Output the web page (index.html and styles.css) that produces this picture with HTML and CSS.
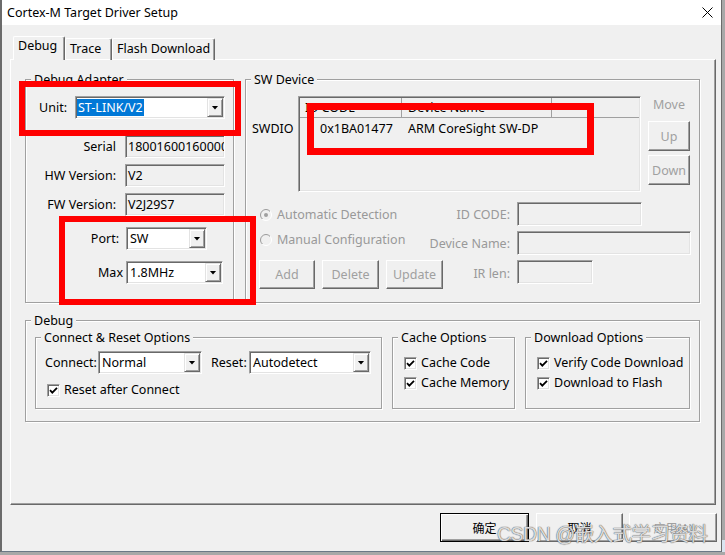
FILE: index.html
```html
<!DOCTYPE html>
<html lang="en">
<head>
    <meta charset="UTF-8">
    <meta name="viewport" content="width=device-width, initial-scale=1.0">
    <title>Cortex-M Target Driver Setup</title>
    <link rel="stylesheet" href="styles.css">
</head>
<body>
<div class="window">
    <div class="titlebar">
        <span class="title">Cortex-M Target Driver Setup</span>
        <svg class="close" width="11" height="11" viewBox="0 0 11 11"><path d="M0.5 0.5L10.5 10.5M10.5 0.5L0.5 10.5" stroke="#000" fill="none"/></svg>
    </div>

    <div class="tabs">
        <div class="tab tab-debug active">Debug</div>
        <div class="tab tab-trace">Trace</div>
        <div class="tab tab-flash">Flash Download</div>
    </div>

    <div class="panel">
        <div class="top-row">
            <!-- Debug Adapter -->
            <fieldset class="group adapter">
                <legend>Debug Adapter</legend>
                <div class="row row-unit">
                    <span class="lbl">Unit:</span>
                    <div class="combo"><span class="value"><span class="selected">ST-LINK/V2</span></span><span class="drop"></span></div>
                </div>
                <div class="row row-info">
                    <span class="lbl">Serial</span>
                    <div class="field">18001600160000325253535</div>
                </div>
                <div class="row row-info row-tight">
                    <span class="lbl">HW Version:</span>
                    <div class="field">V2</div>
                </div>
                <div class="row row-info row-tight">
                    <span class="lbl">FW Version:</span>
                    <div class="field">V2J29S7</div>
                </div>
                <div class="row row-port">
                    <span class="lbl">Port:</span>
                    <div class="combo"><span class="value">SW</span><span class="drop"></span></div>
                </div>
                <div class="row row-max">
                    <span class="lbl">Max</span>
                    <div class="combo"><span class="value">1.8MHz</span><span class="drop"></span></div>
                </div>
            </fieldset>

            <!-- SW Device -->
            <fieldset class="group device">
                <legend>SW Device</legend>
                <div class="device-top">
                    <span class="swdio">SWDIO</span>
                    <div class="list">
                        <div class="list-head">
                            <span class="col col-id">ID CODE</span>
                            <span class="col col-name">Device Name</span>
                            <span class="col col-rest"></span>
                        </div>
                        <div class="list-row">
                            <span class="cell-id">0x1BA01477</span>
                            <span class="cell-name">ARM CoreSight SW-DP</span>
                        </div>
                    </div>
                    <div class="move">
                        <div class="move-label">Move</div>
                        <button class="btn btn-up" disabled>Up</button>
                        <button class="btn btn-down" disabled>Down</button>
                    </div>
                </div>

                <div class="device-bottom">
                    <label class="radio r-auto">
                        <svg width="12" height="12" viewBox="0 0 12 12">
                            <defs><linearGradient id="rg1" x1="0" y1="0" x2="1" y2="1"><stop offset="0.5" stop-color="#9a9a9a"/><stop offset="0.5" stop-color="#fff"/></linearGradient></defs>
                            <circle cx="6" cy="6" r="5.5" fill="#f0f0f0" stroke="url(#rg1)"/>
                            <circle cx="6" cy="6" r="2" fill="#a0a0a0"/>
                        </svg>
                        Automatic Detection
                    </label>
                    <span class="dlbl">ID CODE:</span>
                    <div class="field f-id"></div>

                    <label class="radio r-manual">
                        <svg width="12" height="12" viewBox="0 0 12 12">
                            <defs><linearGradient id="rg2" x1="0" y1="0" x2="1" y2="1"><stop offset="0.5" stop-color="#9a9a9a"/><stop offset="0.5" stop-color="#fff"/></linearGradient></defs>
                            <circle cx="6" cy="6" r="5.5" fill="#f0f0f0" stroke="url(#rg2)"/>
                        </svg>
                        Manual Configuration
                    </label>
                    <span class="dlbl">Device Name:</span>
                    <div class="field f-name"></div>

                    <div class="edit-buttons">
                        <button class="btn b-add" disabled>Add</button>
                        <button class="btn b-delete" disabled>Delete</button>
                        <button class="btn b-update" disabled>Update</button>
                    </div>
                    <span class="dlbl d-ir">IR len:</span>
                    <div class="field f-ir"></div>
                </div>
            </fieldset>
        </div>

        <!-- Debug -->
        <fieldset class="group debug">
            <legend>Debug</legend>
            <div class="debug-row">
                <fieldset class="group connect">
                    <legend>Connect &amp; Reset Options</legend>
                    <div class="row connect-line">
                        <span class="l-connect">Connect:</span>
                        <div class="combo c-connect"><span class="value">Normal</span><span class="drop"></span></div>
                        <span class="l-reset">Reset:</span>
                        <div class="combo c-reset"><span class="value">Autodetect</span><span class="drop"></span></div>
                    </div>
                    <label class="check-line cl-reset">
                        <span class="check"><svg width="11" height="11" viewBox="0 0 11 11"><path d="M2 5.2L4.3 7.6L9 2.8" stroke="#000" stroke-width="1.8" fill="none"/></svg></span>
                        Reset after Connect
                    </label>
                </fieldset>

                <fieldset class="group cache">
                    <legend>Cache Options</legend>
                    <div class="checks">
                        <label class="check-line">
                            <span class="check"><svg width="11" height="11" viewBox="0 0 11 11"><path d="M2 5.2L4.3 7.6L9 2.8" stroke="#000" stroke-width="1.8" fill="none"/></svg></span>
                            Cache Code
                        </label>
                        <label class="check-line">
                            <span class="check"><svg width="11" height="11" viewBox="0 0 11 11"><path d="M2 5.2L4.3 7.6L9 2.8" stroke="#000" stroke-width="1.8" fill="none"/></svg></span>
                            Cache Memory
                        </label>
                    </div>
                </fieldset>

                <fieldset class="group download">
                    <legend>Download Options</legend>
                    <div class="checks">
                        <label class="check-line">
                            <span class="check"><svg width="11" height="11" viewBox="0 0 11 11"><path d="M2 5.2L4.3 7.6L9 2.8" stroke="#000" stroke-width="1.8" fill="none"/></svg></span>
                            Verify Code Download
                        </label>
                        <label class="check-line">
                            <span class="check"><svg width="11" height="11" viewBox="0 0 11 11"><path d="M2 5.2L4.3 7.6L9 2.8" stroke="#000" stroke-width="1.8" fill="none"/></svg></span>
                            Download to Flash
                        </label>
                    </div>
                </fieldset>
            </div>
        </fieldset>
    </div>

    <div class="actions">
        <button class="btn btn-ok">确定</button>
        <button class="btn btn-cancel">取消</button>
        <button class="btn btn-apply" disabled>应用(A)</button>
    </div>

    <!-- annotations drawn over the dialog -->
    <div class="mark mark-unit"></div>
    <div class="mark mark-port"></div>
    <div class="mark mark-device"></div>
    <div class="watermark">CSDN @嵌入式学习资料</div>
</div>
</body>
</html>
```

FILE: styles.css
```css
* {
    box-sizing: border-box;
}

body {
    margin: 0;
    background: linear-gradient(#a8a8a8 540px, #d9e4f0 540px);
    font-family: "Noto Sans", "Noto Sans CJK SC", sans-serif;
    font-size: 12.5px;
    color: #000;
}

/* --- Window frame --- */

.window {
    position: relative;
    width: 722px;
    height: 552px;
    background: #f0f0f0;
    border-left: 2px solid #6b6b6b;
    border-right: 1px solid #6b6b6b;
    border-bottom: 1px solid #6b7886;
}

.titlebar {
    height: 25px;
    background: #fff;
    display: flex;
    align-items: center;
    justify-content: space-between;
    padding: 0 8px 0 5px;
}

.title {
    line-height: 25px;
}

/* --- Tabs --- */

.tabs {
    display: flex;
    align-items: flex-end;
    height: 24px;
    margin-top: 11px;
    padding-left: 11px;
}

.tab {
    height: 22px;
    line-height: 19px;
    padding-left: 4px;
    border: 1px solid;
    border-bottom: 0;
    border-color: #fff #696969 #fff #fff;
    box-shadow: inset -1px 0 #a0a0a0;
    border-radius: 2px 2px 0 0;
    white-space: nowrap;
}

.tab.active {
    position: relative;
    z-index: 1;
    height: 24px;
    line-height: 18px;
    background: #f0f0f0;
}

.tab-debug { width: 52px; }
.tab-trace { width: 47px; }
.tab-flash { width: 103px; }

.panel {
    width: 706px;
    height: 446px;
    margin: -1px 0 0 8px;
    padding: 11px 0 0 14px;
    border: 1px solid;
    border-color: #fff #696969 #696969 #fff;
    box-shadow: inset -1px -1px #a0a0a0;
}

/* --- Group boxes --- */

.group {
    margin: 0;
    padding: 0;
    min-width: 0;
    flex: none;
    border: 1px solid #a0a0a0;
    box-shadow: inset 1px 1px #fff, 1px 1px #fff;
}

.group legend {
    margin-left: 5px;
    padding: 0 3px;
    line-height: 17px;
    background: #f0f0f0;
}

.top-row {
    display: flex;
    gap: 11px;
}

.adapter {
    width: 209px;
    height: 232px;
}

.device {
    width: 455px;
    height: 232px;
}

.debug {
    width: 675px;
    height: 110px;
    margin-top: 9px;
}

/* --- Common controls --- */

.row {
    display: flex;
    align-items: center;
}

.lbl {
    flex: none;
    text-align: right;
    line-height: 23px;
    white-space: nowrap;
}

.combo {
    display: flex;
    flex: none;
    height: 23px;
    padding: 1px;
    background: #fff;
    border: 1px solid;
    border-color: #a0a0a0 #fff #fff #a0a0a0;
    box-shadow: inset 1px 1px #696969, inset -1px -1px #e3e3e3;
}

.combo .value {
    flex: 1;
    padding-left: 2px;
    line-height: 19px;
    white-space: nowrap;
    overflow: hidden;
}

.combo .drop {
    width: 16px;
    display: flex;
    align-items: center;
    justify-content: center;
    background: #f0f0f0;
    border: 1px solid;
    border-color: #e3e3e3 #696969 #696969 #e3e3e3;
    box-shadow: inset 1px 1px #fff, inset -1px -1px #a0a0a0;
}

.combo .drop::after {
    content: "";
    width: 7px;
    height: 4px;
    background: #000;
    clip-path: polygon(0 0, 100% 0, 50% 100%);
}

.selected {
    display: inline-block;
    padding: 0 1px;
    line-height: 17px;
    margin-top: 1px;
    background: #0078d7;
    color: #fff;
}

.field {
    flex: none;
    height: 23px;
    padding: 0 2px;
    line-height: 21px;
    background: #f0f0f0;
    border: 1px solid;
    border-color: #a0a0a0 #fff #fff #a0a0a0;
    box-shadow: inset 1px 1px #696969, inset -1px -1px #e3e3e3;
    white-space: nowrap;
    overflow: hidden;
}

.btn {
    font: inherit;
    color: #000;
    background: #f0f0f0;
    padding: 0;
    border: 1px solid;
    border-color: #fff #696969 #696969 #fff;
    box-shadow: inset -1px -1px #a0a0a0;
}

.btn:disabled {
    color: #a0a0a0;
}

.check-line {
    display: flex;
    align-items: center;
    line-height: 16px;
    white-space: nowrap;
}

.check {
    flex: none;
    width: 13px;
    height: 13px;
    margin-right: 4px;
    background: #fff;
    border: 1px solid;
    border-color: #a0a0a0 #fff #fff #a0a0a0;
    box-shadow: inset 1px 1px #696969, inset -1px -1px #e3e3e3;
    display: flex;
    align-items: center;
    justify-content: center;
}

/* --- Debug Adapter rows --- */

.row-unit { margin-top: 8px; }
.row-unit .lbl { width: 41px; margin-right: 8px; }
.row-unit .combo { width: 150px; }
.row-unit .value { padding-left: 0; }

.row-info { margin-top: 16px; }
.row-tight { margin-top: 6px; }
.row-info .lbl { width: 90px; margin-right: 9px; }
.row-info .field { width: 100px; }

.row-port { margin-top: 11px; }
.row-port .lbl { width: 93px; margin-right: 7px; }
.row-port .combo { width: 81px; }

.row-max { margin-top: 11px; }
.row-max .lbl { width: 97px; margin-right: 3px; }
.row-max .combo { width: 97px; }

/* --- SW Device --- */

.device-top {
    display: flex;
    align-items: flex-start;
    margin-top: 8px;
}

.swdio {
    width: 46px;
    margin: 25px 0 0 6px;
    line-height: 16px;
}

.list {
    width: 343px;
    height: 96px;
    padding: 1px;
    background: #f0f0f0;
    border: 1px solid;
    border-color: #a0a0a0 #fff #fff #a0a0a0;
    box-shadow: inset 1px 1px #696969, inset -1px -1px #e3e3e3;
}

.list-head {
    display: flex;
    height: 20px;
    border-bottom: 1px solid #a0a0a0;
}

.col {
    height: 19px;
    line-height: 19px;
    padding-left: 5px;
    border-right: 1px solid #a0a0a0;
    white-space: nowrap;
}

.col-id { width: 102px; }
.col-name { width: 150px; padding-left: 6px; }
.col-rest { flex: 1; border-right: 0; }

.list-row {
    display: flex;
    line-height: 22px;
    white-space: nowrap;
}

.cell-id { width: 102px; padding-left: 20px; }
.cell-name { padding-left: 6px; }

.move {
    width: 42px;
    margin-left: 7px;
}

.move-label {
    margin-top: 1px;
    line-height: 16px;
    text-align: center;
    color: #a0a0a0;
}

.move .btn {
    display: block;
    width: 42px;
    height: 30px;
}

.btn-up { margin-top: 8px; }
.btn-down { margin-top: 4px; }

.device-bottom {
    display: grid;
    grid-template-columns: minmax(0, 1fr) auto 174px;
    grid-template-rows: 24px 24px 29px;
    column-gap: 7px;
    row-gap: 5px;
    align-items: center;
    margin: 10px 8px 0 13px;
}

.radio {
    display: flex;
    align-items: center;
    gap: 5px;
    margin-left: 1px;
    line-height: 16px;
    color: #999;
    white-space: nowrap;
}

.radio svg {
    flex: none;
}

.r-auto {
    align-self: start;
    margin-top: 5px;
}

.r-manual {
    align-self: start;
    margin-top: 1px;
}

.dlbl {
    justify-self: end;
    color: #999;
    white-space: nowrap;
}

.d-ir {
    align-self: start;
    margin-top: 5px;
}

.device-bottom .field {
    height: 24px;
}

.f-id { width: 125px; }
.f-name { width: 174px; }
.f-ir { width: 76px; align-self: start; }

.edit-buttons {
    display: flex;
    gap: 7px;
    white-space: nowrap;
}

.edit-buttons .btn {
    flex: none;
    height: 29px;
}

.b-add { width: 56px; }
.b-delete { width: 57px; }
.b-update { width: 57px; }

/* --- Debug options --- */

.debug-row {
    display: flex;
    gap: 10px;
    padding-left: 9px;
}

.connect { width: 347px; height: 80px; }
.cache { width: 123px; height: 80px; }
.download { width: 165px; height: 80px; }

.connect-line {
    margin-top: 5px;
    line-height: 23px;
}

.l-connect {
    width: 53px;
    margin-left: 9px;
}

.c-connect { width: 104px; }

.l-reset {
    width: 38px;
    margin-left: 9px;
}

.c-reset { width: 122px; }

.cl-reset {
    margin: 8px 0 0 11px;
}

.checks {
    margin: 7px 0 0 11px;
}

.checks .check-line {
    line-height: 20px;
}

/* --- Dialog buttons --- */

.actions {
    display: flex;
    justify-content: flex-end;
    margin-top: 8px;
    padding-right: 4px;
}

.actions .btn {
    height: 29px;
    font-size: 12px;
}

.btn-ok {
    width: 89px;
    border-color: #000;
    box-shadow: inset 1px 1px #fff, inset -1px -1px #696969, inset -2px -2px #a0a0a0;
}

.btn-cancel {
    width: 87px;
    margin-left: 7px;
}

.btn-apply {
    width: 88px;
    margin-left: 6px;
}

/* --- Annotations over the screenshot --- */

.mark {
    position: absolute;
    border: 6px solid #f00;
}

.mark-unit {
    left: 17px;
    top: 81px;
    width: 222px;
    height: 55px;
}

.mark-port {
    left: 57px;
    top: 216px;
    width: 197px;
    height: 89px;
}

.mark-device {
    left: 305px;
    top: 103px;
    width: 287px;
    height: 52px;
    border-width: 7px;
}

.watermark {
    position: absolute;
    left: 495px;
    top: 522px;
    font-family: "Liberation Sans", "Noto Sans CJK SC", sans-serif;
    font-size: 19.5px;
    line-height: 24px;
    letter-spacing: -0.5px;
    color: rgba(255, 255, 255, 0.8);
    text-shadow: 0 0 1px #555, 0 0 1px #555;
    white-space: nowrap;
    pointer-events: none;
}
```
